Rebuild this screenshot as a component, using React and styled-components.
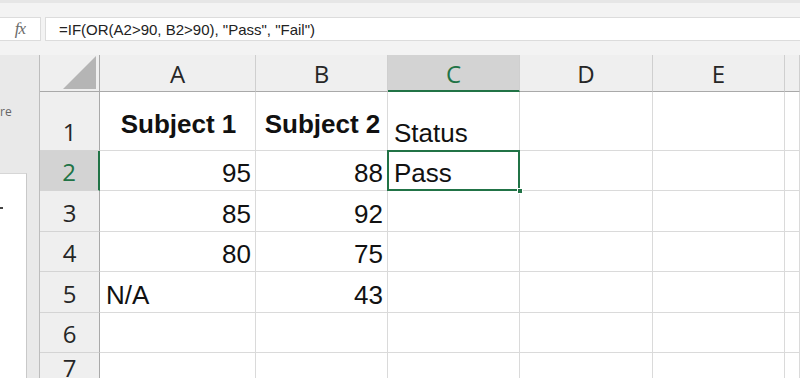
import React from "react";
import styled, { createGlobalStyle, css } from "styled-components";

const GREEN = "#217346";

const GlobalStyle = createGlobalStyle`
  html, body {
    margin: 0;
    padding: 0;
    background: #f3f3f3;
    overflow: hidden;
  }
  * {
    box-sizing: border-box;
  }
`;

const Page = styled.div`
  width: 800px;
  height: 378px;
  display: flex;
  flex-direction: column;
  font-family: "Liberation Sans", Arial, sans-serif;
  background: #f3f3f3;
`;

const FormulaRow = styled.div`
  height: 55px;
  display: flex;
  gap: 4px;
  padding: 14px 0 14px 0;
  border-top: 3px solid #e6e6e6;
`;

const FxBox = styled.div`
  width: 41px;
  background: #fff;
  border: 1px solid #dcdcdc;
  border-left: none;
  display: flex;
  align-items: center;
  justify-content: center;
  font-family: "Liberation Serif", "Times New Roman", serif;
  font-style: italic;
  font-size: 17px;
  color: #6b6b6b;
  letter-spacing: -1px;
`;

const FormulaInput = styled.div`
  flex: 1;
  background: #fff;
  border: 1px solid #dcdcdc;
  border-right: none;
  display: flex;
  align-items: center;
  padding-left: 13px;
  font-size: 15px;
  color: #222;
`;

const Body = styled.div`
  flex: 1;
  display: flex;
  min-height: 0;
`;

const SidePanel = styled.div`
  width: 40px;
  background: #e9e9e9;
  border-right: 1px solid #bdbdbd;
  display: flex;
  flex-direction: column;
`;

const SideLabel = styled.div`
  margin-top: 50px;
  height: 14px;
  font-family: "Open Sans", sans-serif;
  font-size: 12px;
  line-height: 14px;
  color: #666;
`;

const SideBox = styled.div`
  margin-top: 54px;
  width: 27px;
  flex: 1;
  background: #fff;
  border-top: 1px solid #d6d6d6;
  border-right: 1px solid #c9c9c9;
  padding-top: 33px;
`;

const Dash = styled.div`
  width: 3px;
  height: 2px;
  background: #444;
`;

const Grid = styled.div`
  flex: 1;
  display: grid;
  grid-template-columns: 60px 156px 132px 132px 133px 132px 1fr;
  grid-template-rows: 37px 59px 40px 41px 40px 41px 40px 1fr;
  background: #fff;
  overflow: hidden;
`;

const Corner = styled.div`
  background: #efefef;
  border-bottom: 1px solid #a9a9a9;
  border-right: 1px solid #a9a9a9;
  display: flex;
  align-items: flex-end;
  justify-content: flex-end;
  padding: 0 3px 2px 0;
`;

const ColHead = styled.div`
  background: ${(p) => (p.$active ? "#d3d3d3" : "#efefef")};
  border-right: 1px solid #cfcfcf;
  border-bottom: ${(p) => (p.$active ? `2px solid ${GREEN}` : "1px solid #a9a9a9")};
  display: flex;
  align-items: center;
  justify-content: center;
  font-family: "Open Sans", "Liberation Sans", sans-serif;
  font-size: 24px;
  color: ${(p) => (p.$active ? GREEN : "#262626")};
  padding-top: ${(p) => (p.$active ? "1px" : "0")};
`;

const RowHead = styled.div`
  background: ${(p) => (p.$active ? "#d3d3d3" : "#efefef")};
  border-bottom: 1px solid #d4d4d4;
  border-right: ${(p) => (p.$active ? `2px solid ${GREEN}` : "1px solid #a9a9a9")};
  display: flex;
  align-items: flex-end;
  justify-content: center;
  padding-bottom: 3px;
  font-family: "Open Sans", "Liberation Sans", sans-serif;
  font-size: 24px;
  line-height: 30px;
  color: ${(p) => (p.$active ? GREEN : "#262626")};
`;

const justify = { left: "flex-start", right: "flex-end", center: "center" };

const Cell = styled.div`
  position: relative;
  border-right: 1px solid #dadada;
  border-bottom: 1px solid #dadada;
  display: flex;
  align-items: flex-end;
  justify-content: ${(p) => justify[p.$align || "left"]};
  padding: 0 4px ${(p) => p.$pb || 4}px 6px;
  font-size: 26px;
  line-height: 26px;
  color: #111;
  font-weight: ${(p) => (p.$bold ? 700 : 400)};
  white-space: nowrap;
  ${(p) =>
    p.$selected &&
    css`
      &::after {
        content: "";
        position: absolute;
        left: -1px;
        top: -1px;
        right: -1px;
        bottom: -1px;
        border: 2px solid ${GREEN};
        pointer-events: none;
      }
    `}
`;

const FillHandle = styled.span`
  position: absolute;
  right: -4px;
  bottom: -4px;
  width: 6px;
  height: 6px;
  background: ${GREEN};
  border: 1px solid #fff;
  z-index: 2;
`;

const columns = ["A", "B", "C", "D", "E", ""];

const rows = [
  [
    { v: "Subject 1", bold: true, pb: 13, align: "center" },
    { v: "Subject 2", bold: true, pb: 13, align: "center" },
    { v: "Status" },
  ],
  [{ v: "95", align: "right" }, { v: "88", align: "right" }, { v: "Pass", selected: true }],
  [{ v: "85", align: "right" }, { v: "92", align: "right" }, {}],
  [{ v: "80", align: "right" }, { v: "75", align: "right" }, {}],
  [{ v: "N/A" }, { v: "43", align: "right" }, {}],
  [{}, {}, {}],
  [{}, {}, {}],
];

const App = () => {
  return (
    <Page>
      <GlobalStyle />
      <FormulaRow>
        <FxBox>fx</FxBox>
        <FormulaInput>=IF(OR(A2&gt;90, B2&gt;90), "Pass", "Fail")</FormulaInput>
      </FormulaRow>
      <Body>
        <SidePanel>
          <SideLabel>re</SideLabel>
          <SideBox>
            <Dash />
          </SideBox>
        </SidePanel>
        <Grid>
          <Corner>
            <svg width="33" height="33" viewBox="0 0 33 33">
              <polygon points="33,0 33,33 0,33" fill="#b5b5b5" />
            </svg>
          </Corner>
          {columns.map((c) => (
            <ColHead key={c || "f"} $active={c === "C"}>
              {c}
            </ColHead>
          ))}
          {rows.map((row, i) => (
            <React.Fragment key={i}>
              <RowHead $active={i === 1}>{i + 1}</RowHead>
              {row.map((cell, j) => (
                <Cell
                  key={j}
                  $align={cell.align}
                  $bold={cell.bold}
                  $pb={cell.pb}
                  $selected={cell.selected}
                >
                  {cell.v}
                  {cell.selected && <FillHandle />}
                </Cell>
              ))}
              <Cell />
              <Cell />
              <Cell />
            </React.Fragment>
          ))}
        </Grid>
      </Body>
    </Page>
  );
};

export default App;
